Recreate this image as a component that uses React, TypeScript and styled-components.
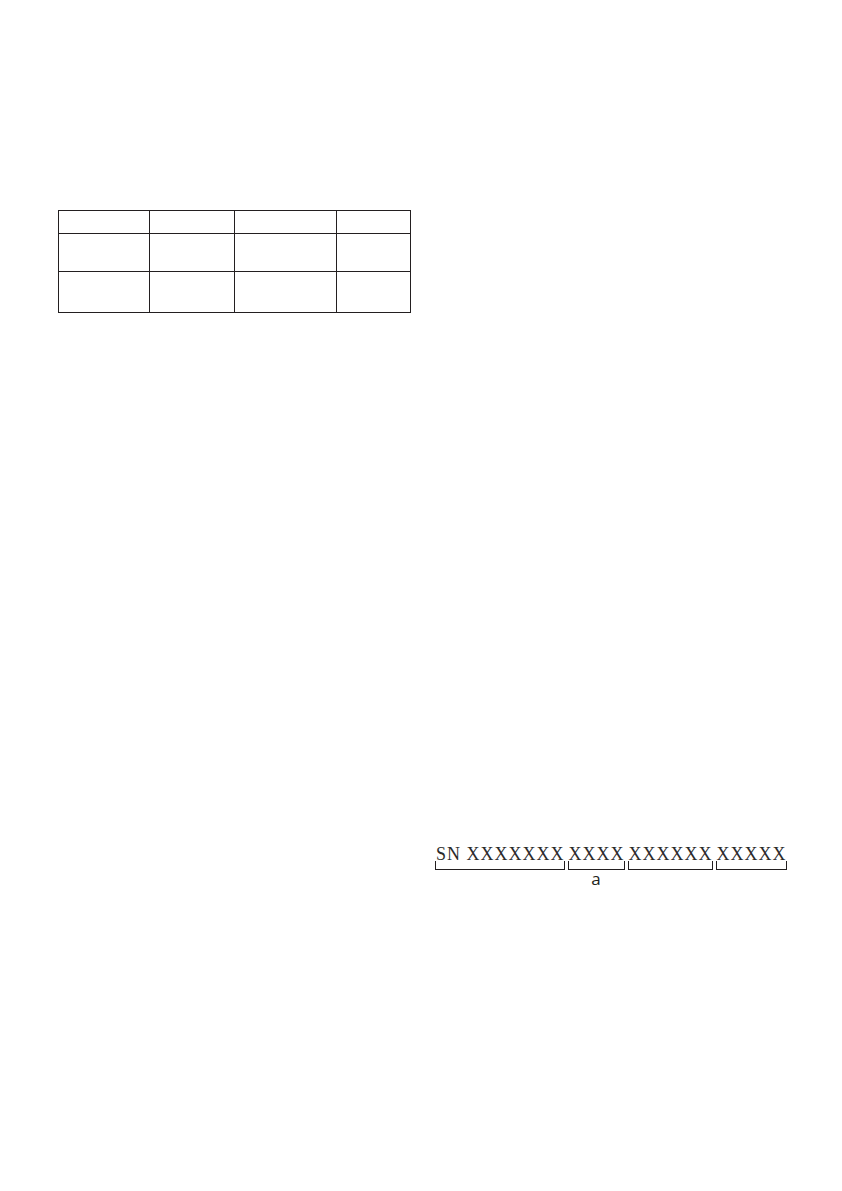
import React from "react";
import styled, { createGlobalStyle } from "styled-components";

const GlobalStyle = createGlobalStyle`
  html, body {
    margin: 0;
    padding: 0;
    background: #ffffff;
  }
  body {
    font-family: "Liberation Serif", serif;
    color: #231f20;
  }
`;

const Page = styled.div`
  width: 842px;
  min-height: 1191px;
  box-sizing: border-box;
  padding: 210px 0 0 58px;
  background: #fff;
`;

const Table = styled.table`
  border-collapse: collapse;
  table-layout: fixed;
`;

const Cell = styled.td<{ $w: number; $h: number }>`
  width: ${({ $w }) => $w}px;
  height: ${({ $h }) => $h}px;
  padding: 0;
  border: 1.4px solid #231f20;
`;

const Figure = styled.div`
  display: flex;
  gap: 3px;
  margin: 533px 0 0 377px;
`;

const Segment = styled.div`
  display: flex;
  flex-direction: column;
  align-items: stretch;
`;

const Code = styled.span`
  display: block;
  padding: 0 0 0 1px;
  font-family: "Liberation Serif", "Times New Roman", serif;
  font-size: 18px;
  line-height: 17px;
  letter-spacing: 1px;
  color: #2a2a2a;
  white-space: nowrap;
`;

const Bracket = styled.div`
  height: 8px;
  margin-top: -2px;
  border: 1.4px solid #231f20;
  border-top: none;
`;

const Caption = styled.span`
  align-self: center;
  margin-top: 0;
  font-family: "Open Sans", "Noto Sans", sans-serif;
  font-size: 17px;
  line-height: 18px;
  color: #231f20;
`;

const columns = [90, 84, 101, 73];
const rows = [22, 37, 40];

const segments: { text: string; caption?: string }[] = [
  { text: "SN XXXXXXX" },
  { text: "XXXX", caption: "a" },
  { text: "XXXXXX" },
  { text: "XXXXX" },
];

export default function App() {
  return (
    <>
      <GlobalStyle />
      <Page>
        <Table>
          <tbody>
            {rows.map((h, r) => (
              <tr key={r}>
                {columns.map((w, c) => (
                  <Cell key={c} $w={w} $h={h} />
                ))}
              </tr>
            ))}
          </tbody>
        </Table>
        <Figure>
          {segments.map((s, i) => (
            <Segment key={i}>
              <Code>{s.text}</Code>
              <Bracket />
              {s.caption && <Caption>{s.caption}</Caption>}
            </Segment>
          ))}
        </Figure>
      </Page>
    </>
  );
}
